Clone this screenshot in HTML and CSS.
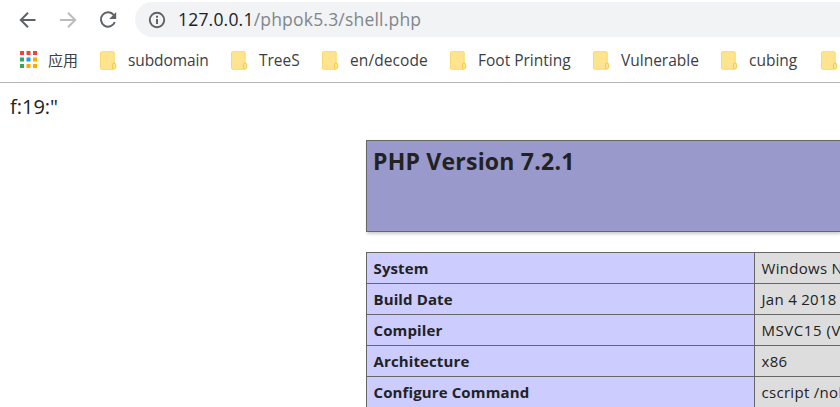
FILE: index.html
```html
<!DOCTYPE html>
<html lang="zh-CN">
<head>
<meta charset="utf-8">
<title>phpinfo()</title>
<link rel="stylesheet" href="styles.css">
</head>
<body>
<svg class="defs" width="0" height="0" aria-hidden="true">
  <symbol id="folder" viewBox="0 0 17 19">
    <path d="M1.5 .7h11.7q1 0 1 1v15.6q0 1-1 1H1.5q-1 0-1-1V1.7q0-1 1-1z" fill="#ffe48f" stroke="#fbd968"/>
    <path d="M12.5 17.5v-4q0-1.3 1.3-1.3h.6q1.3 0 1.3 1.3v2.7q0 1.8-2.2 1.8z" fill="#ffe48f" stroke="#f3cb45"/>
  </symbol>
</svg>
<header class="browser">
  <div class="toolbar">
    <svg class="nav" width="18" height="18" viewBox="0 0 18 18"><path d="M16.5 9H2M9 1.8 1.8 9 9 16.2" fill="none" stroke="#5f6368" stroke-width="2"/></svg>
    <svg class="nav" width="18" height="18" viewBox="0 0 18 18"><path d="M1 9h15M9 1.8 16.2 9 9 16.2" fill="none" stroke="#babcbe" stroke-width="2"/></svg>
    <svg class="nav" width="18" height="18" viewBox="0 0 18 18"><path d="M14.8 4A7.2 7.2 0 1 0 15.8 11.2" fill="none" stroke="#5f6368" stroke-width="2"/><path d="M17.2 1v7h-7z" fill="#5f6368"/></svg>
    <div class="address">
      <svg width="18" height="18" viewBox="0 0 18 18"><circle cx="9" cy="9" r="7.2" fill="none" stroke="#5f6368" stroke-width="1.9"/><path d="M8 8h2v5H8zM8 4.8h2v2H8z" fill="#5f6368"/></svg>
      <span class="url"><b>127.0.0.1</b>/phpok5.3/shell.php</span>
    </div>
  </div>
  <nav class="bookmarks">
    <a class="apps"><svg width="17" height="17" viewBox="0 0 17 17"><path d="M0 0h4v4H0zM6.5 0h4v4h-4zM13 0h4v4h-4z" fill="#f44336"/><path d="M0 6.5h4v4H0zM0 13h4v4H0z" fill="#34a853"/><path d="M6.5 6.5h4v4h-4z" fill="#2196f3"/><path d="M13 6.5h4v4h-4zM6.5 13h4v4h-4zM13 13h4v4h-4z" fill="#ffaa00"/></svg><span>应用</span></a>
    <a class="subdomain"><svg><use href="#folder"/></svg><span>subdomain</span></a>
    <a class="trees"><svg><use href="#folder"/></svg><span>TreeS</span></a>
    <a class="decode"><svg><use href="#folder"/></svg><span>en/decode</span></a>
    <a class="foot"><svg><use href="#folder"/></svg><span>Foot Printing</span></a>
    <a class="vulnerable"><svg><use href="#folder"/></svg><span>Vulnerable</span></a>
    <a class="cubing"><svg><use href="#folder"/></svg><span>cubing</span></a>
    <a><svg><use href="#folder"/></svg></a>
  </nav>
</header>
<main>
  <p class="output">f:19:"</p>
  <div class="info">
    <section class="banner"><h1>PHP Version 7.2.1</h1></section>
    <dl class="settings">
      <dt>System</dt><dd>Windows NT</dd>
      <dt>Build Date</dt><dd>Jan 4 2018</dd>
      <dt>Compiler</dt><dd class="compiler">MSVC15 (Visual C++ 2017)</dd>
      <dt>Architecture</dt><dd>x86</dd>
      <dt>Configure Command</dt><dd>cscript /nologo configure.js</dd>
    </dl>
  </div>
</main>
</body>
</html>
```
FILE: styles.css
```css
* { box-sizing: border-box; }
html { overflow: hidden; }
body {
  margin: 0;
  height: 407px;
  overflow: hidden;
  background: #fff;
  color: #222;
  font-family: "Open Sans", "Noto Sans CJK SC", sans-serif;
}
.defs { position: absolute; }
.browser { height: 83px; border-bottom: 1px solid #b6b4b6; }
.toolbar { display: flex; align-items: center; height: 39px; padding-left: 19px; }
.nav { flex: none; margin-right: 22px; }
.address {
  flex: 1;
  display: flex;
  align-items: center;
  height: 35px;
  margin: 0 0 0 -4px;
  padding-left: 13px;
  border-radius: 18px 0 0 18px;
  background: #f1f3f4;
}
.url { margin: -2px 0 0 12px; font-size: 17.5px; line-height: 24px; letter-spacing: .2px; color: #80868b; white-space: nowrap; }
.url b { font-weight: 400; color: #202124; }
.bookmarks { display: flex; height: 43px; padding-left: 20px; overflow: hidden; }
.bookmarks a { flex: none; display: flex; align-items: center; font-size: 15.5px; line-height: 24px; color: #3c4043; white-space: nowrap; }
.bookmarks svg { flex: none; width: 17px; height: 19px; margin-right: 11px; }
.bookmarks span { margin-top: -1px; }
.bookmarks .apps { width: 80px; font-size: 15px; }
.bookmarks .apps svg { height: 17px; margin-top: -2px; }
.bookmarks .apps span { margin-top: -2px; }
.subdomain { width: 131px; }
.subdomain span { letter-spacing: -.1px; }
.trees { width: 91px; }
.decode { width: 128px; }
.decode span { letter-spacing: .1px; }
.foot { width: 143px; }
.vulnerable { width: 128px; }
.cubing { width: 100px; }
.output { margin: 9px 0 0 10px; font-size: 20px; line-height: 30px; }
.info { width: 474px; height: 267px; margin: 18px 0 0 366px; }
.banner { height: 92px; padding: 5px 6px; border: 1px solid #666; border-right: 0; background: #99c; box-shadow: 1px 2px 3px #ccc; }
h1 { margin: 0; font-size: 23px; line-height: 30px; font-weight: 700; letter-spacing: .22px; }
.settings {
  display: grid;
  grid-template-columns: 387px 1fr;
  grid-auto-rows: 30px;
  gap: 1px;
  height: 155px;
  margin: 20px 0 0;
  padding: 1px 0 0 1px;
  overflow: hidden;
  background: #666;
  font-size: 15px;
  line-height: 20px;
}
dt, dd { margin: 0; padding: 5px 0 5px 6.5px; overflow: hidden; }
dt { background: #ccf; font-weight: 700; letter-spacing: .12px; }
dd { background: #ddd; white-space: nowrap; letter-spacing: .3px; }
.compiler { letter-spacing: .55px; }
```
